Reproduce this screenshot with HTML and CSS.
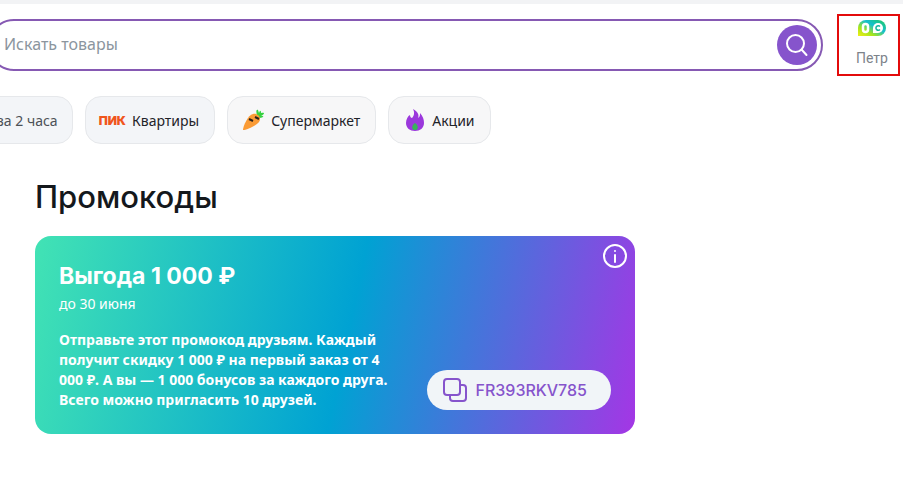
FILE: index.html
```html
<!DOCTYPE html>
<html lang="ru">
<head>
    <meta charset="utf-8">
    <meta name="viewport" content="width=device-width, initial-scale=1.0">
    <title>Промокоды</title>
    <link rel="stylesheet" href="styles.css">
</head>
<body>
    <header class="header">
        <form class="search">
            <input class="search-input" type="text" placeholder="Искать товары" aria-label="Искать товары">
            <button class="search-button" type="button" aria-label="Найти">
                <svg width="40" height="40" viewBox="0 0 40 40" fill="none" stroke="#fff" stroke-width="2" stroke-linecap="round">
                    <circle cx="18.500" cy="18.500" r="8.500"/>
                    <path d="M24.500 24.500l5 5.500"/>
                </svg>
            </button>
        </form>
        <a class="profile" href="#">
            <svg width="28" height="16" viewBox="0 0 28 16">
                <defs>
                    <linearGradient id="bonus" x1="0" y1="1" x2="1" y2="0">
                        <stop offset="0" stop-color="#f2ee16"/>
                        <stop offset=".3" stop-color="#a5e51c"/>
                        <stop offset=".6" stop-color="#14bfd0"/>
                        <stop offset="1" stop-color="#20c95a"/>
                    </linearGradient>
                </defs>
                <path d="M8 0h12a8 8 0 0 1 0 16H0V8a8 8 0 0 1 8-8z" fill="url(#bonus)"/>
                <rect x="5" y="4" width="5" height="8" rx="2.500" fill="none" stroke="#fff" stroke-width="2.500"/>
                <path d="M20 3a5 5 0 1 1 0 10h-5V8a5 5 0 0 1 5-5z" fill="#fff"/>
                <path d="M22 6.500a2.300 2.300 0 1 0 0 3" fill="none" stroke="#15b5a0" stroke-width="1.500"/>
            </svg>
            <span>Петр</span>
        </a>
    </header>

    <nav class="tags">
        <a class="tag tag-first" href="#">за 2 часа</a>
        <a class="tag" href="#">
            <span class="pik">ПИК</span>
            Квартиры
        </a>
        <a class="tag tag-light" href="#">
            <svg width="24" height="24" viewBox="0 0 24 24">
                <path d="M16 8c-1-5-1-7 1-6l1 3c1-3 2-3 2 0 4-1 4 1 0 3 4 0 3 2-4 2z" fill="#35d13f"/>
                <path d="M2 22C2 18 7 7 12 6c5-1 9 4 6 8S5 22 2 22z" fill="#fa9b35"/>
                <path d="M8 11l4 2M14 9l4 2" stroke="#2b211b" stroke-width="2"/>
            </svg>
            Супермаркет
        </a>
        <a class="tag tag-light" href="#">
            <svg width="24" height="24" viewBox="0 0 24 24">
                <path d="M11 1c6 3 6 7 5 9 2-1 2-3 2-5 3 3 4 7 4 10 0 5-4 8-9 8s-9-3-9-8c0-4 2-7 4-8 0 2 1 3 2 3 2-2 3-5 1-9z" fill="#9b38dc"/>
                <path d="M13 15c3 2 4 6 1 7h-2c-3-1-2-5 1-7z" fill="#38b25a"/>
            </svg>
            Акции
        </a>
    </nav>

    <main class="content">
        <h1>Промокоды</h1>
        <section class="promo">
            <button class="info" type="button" aria-label="Информация">
                <svg width="24" height="24" viewBox="0 0 24 24" fill="none" stroke="#fff" stroke-width="2" stroke-linecap="round">
                    <circle cx="12" cy="12" r="11"/>
                    <path d="M12 11v7M12 7v.1"/>
                </svg>
            </button>
            <div class="promo-text">
                <h2>Выгода 1&nbsp;000&nbsp;₽</h2>
                <p class="date">до 30 июня</p>
                <p class="description">Отправьте этот промокод друзьям. Каждый получит скидку 1 000 ₽ на первый заказ от 4 000 ₽. А вы — 1 000 бонусов за каждого друга. Всего можно пригласить 10 друзей.</p>
            </div>
            <button class="code" type="button">
                <svg width="24" height="24" viewBox="0 0 24 24" fill="none" stroke="#8654cc" stroke-width="2">
                    <rect x="1" y="1" width="16" height="16" rx="3"/>
                    <path d="M17 7h3a3 3 0 0 1 3 3v10a3 3 0 0 1-3 3H10a3 3 0 0 1-3-3v-3"/>
                </svg>
                FR393RKV785
            </button>
        </section>
    </main>
</body>
</html>
```
FILE: styles.css
```css
* {
    margin: 0;
    padding: 0;
    box-sizing: border-box;
}

body {
    font-family: "Noto Sans", "Open Sans", sans-serif;
    font-size: 14px;
    color: #1f2329;
    background: #fff;
    border-top: 4px solid #f2f3f5;
    overflow-x: hidden;
}

a {
    color: inherit;
    text-decoration: none;
}

button {
    border: none;
    cursor: pointer;
}

svg {
    display: block;
    flex: none;
}

.header {
    display: flex;
    align-items: center;
    gap: 14px;
    margin-left: -12px;
    padding: 10px 3px 0 0;
}

.search {
    flex: 1;
    display: flex;
    align-items: center;
    height: 52px;
    padding: 0 4px 0 14px;
    border: 2px solid #8659b3;
    border-radius: 26px;
}

.search-input {
    flex: 1;
    height: 40px;
    padding-bottom: 2px;
    border: none;
    outline: none;
    background: none;
    font: 16px "Noto Sans", sans-serif;
}

.search-input::placeholder {
    color: #8b959e;
}

.search-button {
    border-radius: 50%;
    background: #8654cc;
}

.profile {
    width: 63px;
    height: 62px;
    padding: 4px 0 0 7px;
    display: flex;
    flex-direction: column;
    align-items: center;
    gap: 12px;
    border: 2px solid #e30b0b;
    font-family: Roboto, sans-serif;
    line-height: 20px;
    color: #7d838a;
}

.tags {
    display: flex;
    gap: 12px;
    margin: 20px 0 0 -23px;
}

.tag {
    display: flex;
    align-items: center;
    gap: 6px;
    height: 48px;
    padding: 0 15px 0 13px;
    border: 1px solid #e6e8eb;
    border-radius: 16px;
    background: #f3f5f8;
    white-space: nowrap;
}

.tag-first {
    padding: 0 14px 0 19px;
    color: #4c5157;
}

.tag-light {
    background: #f7f7f8;
}

.pik {
    font: 900 12px Inter, sans-serif;
    color: #f0561d;
}

.content {
    padding: 33px 35px;
}

h1 {
    font: 500 31px/40px Inter, sans-serif;
    color: #14181c;
}

.promo {
    position: relative;
    display: flex;
    justify-content: space-between;
    align-items: flex-end;
    max-width: 600px;
    margin-top: 19px;
    padding: 24px;
    border-radius: 16px;
    color: #fff;
    background: linear-gradient(102deg, #42e3b4, #00a2d3 52%, #a436e5);
}

.promo-text {
    width: 340px;
}

h2 {
    font: 700 23px/32px Inter, sans-serif;
}

.date {
    line-height: 24px;
}

.description {
    margin-top: 14px;
    font-weight: 700;
    line-height: 20px;
}

.info {
    position: absolute;
    top: 8px;
    right: 8px;
    background: none;
}

.code {
    display: flex;
    align-items: center;
    gap: 8px;
    height: 40px;
    padding: 0 24px 0 16px;
    border-radius: 20px;
    font: 500 16px Inter, sans-serif;
    color: #8654cc;
    background: #f1f5f8;
}
```
